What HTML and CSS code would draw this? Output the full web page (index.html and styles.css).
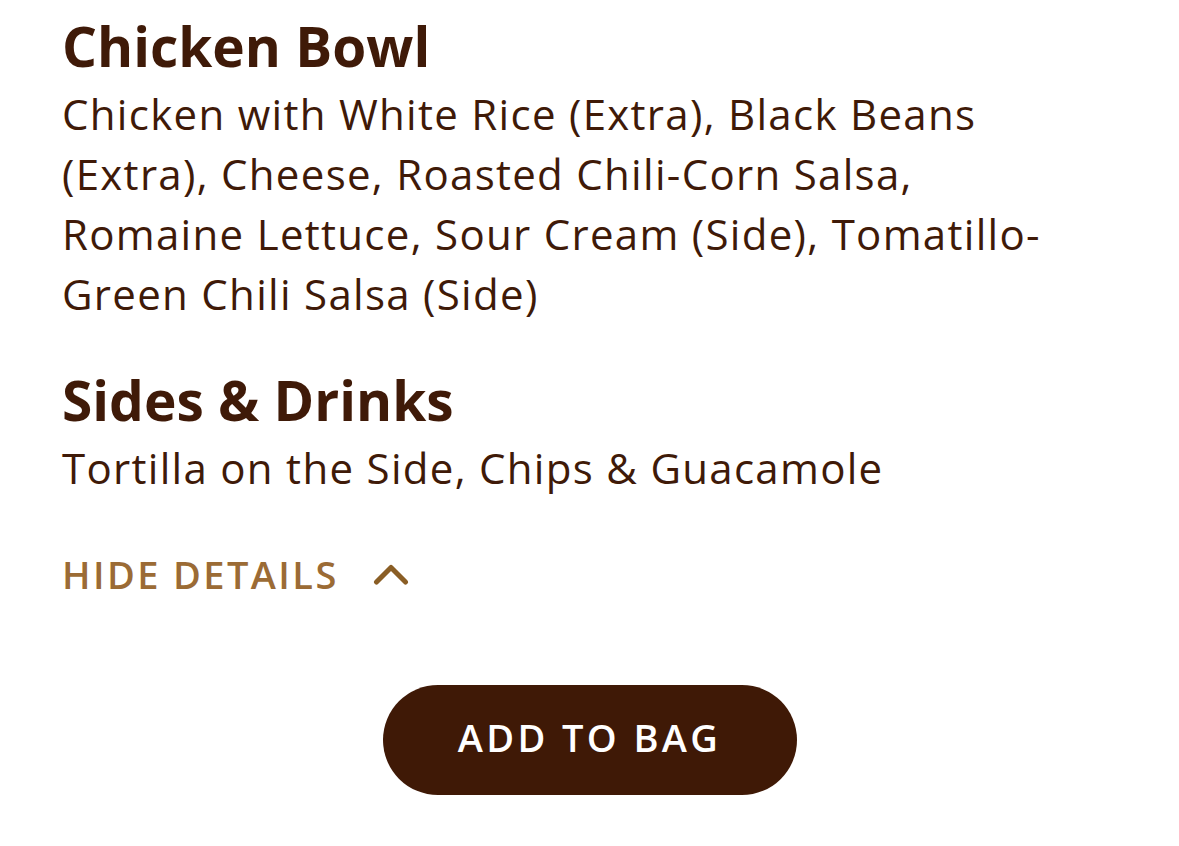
FILE: index.html
```html
<!DOCTYPE html>
<html lang="en">
<head>
<meta charset="utf-8">
<title>Order details</title>
<link rel="stylesheet" href="styles.css">
</head>
<body>
<main class="details">
  <section class="group">
    <h2 class="group-title">Chicken Bowl</h2>
    <p class="group-text">Chicken with White Rice (Extra), Black Beans (Extra), Cheese, Roasted Chili-Corn Salsa, Romaine Lettuce, Sour Cream (Side), Tomatillo-Green Chili Salsa (Side)</p>
  </section>
  <section class="group">
    <h2 class="group-title">Sides &amp; Drinks</h2>
    <p class="group-text">Tortilla on the Side, Chips &amp; Guacamole</p>
  </section>
  <button class="toggle" type="button">
    <span>HIDE DETAILS</span>
    <svg class="chevron" width="36" height="24" viewBox="0 0 36 24" aria-hidden="true">
      <path d="M3.5 20 L18 5.5 L32.5 20" fill="none" stroke="#8a5e25" stroke-width="5" stroke-linecap="round" stroke-linejoin="round"/>
    </svg>
  </button>
  <div class="actions">
    <button class="add" type="button">ADD TO BAG</button>
  </div>
</main>
</body>
</html>
```

FILE: styles.css
```css
html, body {
  margin: 0;
  padding: 0;
  background: #ffffff;
}

body {
  font-family: "Open Sans", "Liberation Sans", sans-serif;
  color: #3f1a08;
}

.details {
  display: flex;
  flex-direction: column;
  align-items: flex-start;
  padding: 11px 0 0 0;
}

.group {
  margin: 0 0 41px 62px;
}

.group:last-of-type {
  margin-bottom: 51px;
}

.group-title {
  margin: 0 0 3px 0;
  font-size: 55px;
  line-height: 70px;
  font-weight: 700;
  letter-spacing: 0;
}

.group-text {
  margin: 0;
  max-width: 1010px;
  font-size: 42px;
  line-height: 60px;
  font-weight: 400;
  letter-spacing: 1.3px;
}

.toggle {
  display: flex;
  align-items: center;
  gap: 34px;
  margin: 0 0 0 62px;
  padding: 0;
  border: 0;
  background: none;
  font-family: inherit;
  font-size: 38px;
  line-height: 50px;
  height: 50px;
  font-weight: 600;
  letter-spacing: 2.4px;
  color: #9b6b35;
}

.chevron {
  display: block;
}

.actions {
  align-self: stretch;
  display: flex;
  justify-content: center;
  padding-top: 86px;
}

.add {
  width: 414px;
  height: 110px;
  padding: 0 0 6px 0;
  border: 0;
  border-radius: 55px;
  background: #3f1906;
  color: #ffffff;
  font-family: inherit;
  font-size: 38px;
  font-weight: 600;
  letter-spacing: 3.4px;
}
```
